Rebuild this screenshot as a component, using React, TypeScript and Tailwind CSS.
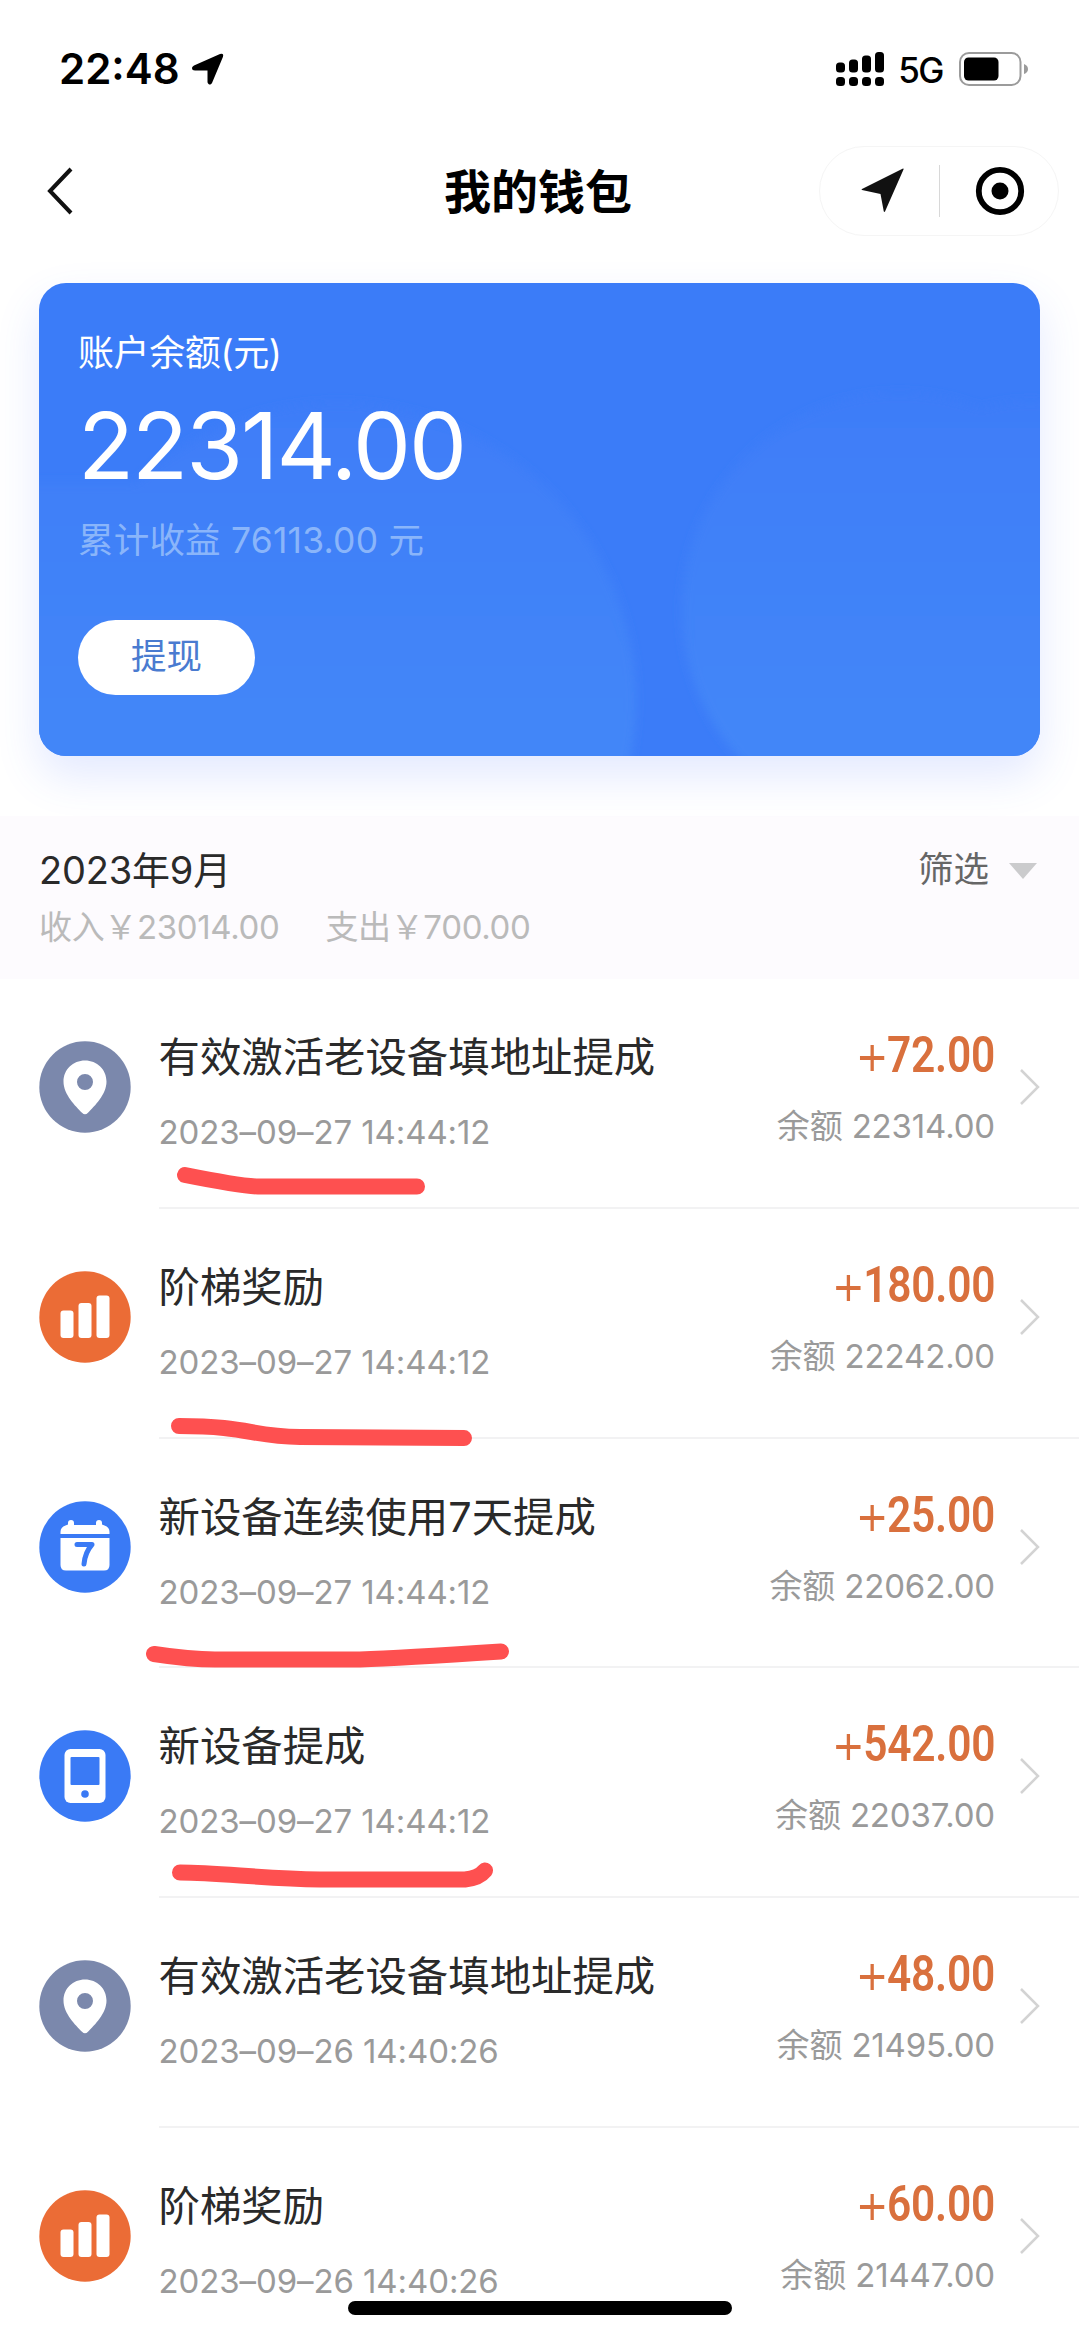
import type { ReactNode } from "react";

type Kind = "pin" | "bars" | "calendar" | "phone";

interface Entry {
  kind: Kind;
  title: string;
  time: string;
  amount: string;
  balance: string;
  mark?: string;
}

/* `mark` is the red pen stroke under an entry, in row coordinates */
const entries: Entry[] = [
  { kind: "pin", title: "有效激活老设备填地址提成", time: "2023–09–27 14:44:12", amount: "72.00", balance: "22314.00", mark: "M185 196 Q240 207 258 207.500 L417 207.500" },
  { kind: "bars", title: "阶梯奖励", time: "2023–09–27 14:44:12", amount: "180.00", balance: "22242.00", mark: "M179 217 C250 217 250 227.500 300 228 L464 229" },
  { kind: "calendar", title: "新设备连续使用7天提成", time: "2023–09–27 14:44:12", amount: "25.00", balance: "22062.00", mark: "M154 215 Q190 220.500 215 220.500 L360 220.500 Q400 219 501 212.500" },
  { kind: "phone", title: "新设备提成", time: "2023–09–27 14:44:12", amount: "542.00", balance: "22037.00", mark: "M180 204.500 C220 204.500 260 210.500 320 211.500 L465 211.500 Q479 210 485 202.500" },
  { kind: "pin", title: "有效激活老设备填地址提成", time: "2023–09–26 14:40:26", amount: "48.00", balance: "21495.00" },
  { kind: "bars", title: "阶梯奖励", time: "2023–09–26 14:40:26", amount: "60.00", balance: "21447.00" },
];

const glyphs: Record<Kind, { fill: string; art: ReactNode }> = {
  pin: {
    fill: "#7b88ac",
    art: (
      <path
        fillRule="evenodd"
        fill="#fff"
        d="M46 19.500c-12 0-21.500 9-21.500 21 0 13 12 24.500 18.500 31.300q3 3 6 0C55.500 65 67.500 53.500 67.500 40.500c0-12-9.500-21-21.500-21zm0 13.500a8 8 0 1 1 0 16 8 8 0 0 1 0-16z"
      />
    ),
  },
  bars: {
    fill: "#eb6c36",
    art: (
      <g fill="#fff">
        <rect x="21.500" y="39.500" width="13" height="27.500" rx="3" />
        <rect x="39.500" y="32" width="13" height="35" rx="3" />
        <rect x="57.500" y="24.500" width="13" height="42.500" rx="3" />
      </g>
    ),
  },
  calendar: {
    fill: "#3a7af5",
    art: (
      <g>
        <path
          fill="#fff"
          d="M21.500 33v-2q0-5 5-6.500l2.500-1v-1.500a3 3 0 0 1 6 0v2h22v-2a3 3 0 0 1 6 0v1.500l2.500 1q5 1.500 5 6.500v2zM21.500 37h49v27q0 5.500-5.500 5.500H27q-5.500 0-5.500-5.500z"
        />
        <path d="M38 43.500h15q-7 8-8 19.500" fill="none" stroke="#3a7af5" strokeWidth="5" strokeLinecap="round" strokeLinejoin="round" />
      </g>
    ),
  },
  phone: {
    fill: "#3a7af5",
    art: (
      <g>
        <rect x="25.500" y="19" width="41" height="54" rx="6" fill="#fff" />
        <rect x="31.500" y="27" width="29" height="28" rx="1" fill="#3a7af5" />
        <circle cx="46" cy="64" r="3.800" fill="#3a7af5" />
      </g>
    ),
  },
};

function EntryIcon({ kind }: { kind: Kind }) {
  const { fill, art } = glyphs[kind];
  return (
    <svg viewBox="0 0 92 92" className="mt-[62px] size-[92px] shrink-0">
      <circle cx="46" cy="46" r="45.700" fill={fill} />
      {art}
    </svg>
  );
}

function EntryRow({ entry }: { entry: Entry }) {
  return (
    <li className="relative flex h-[229.8px] shrink-0 pl-[38.5px]">
      <EntryIcon kind={entry.kind} />
      <div className="ml-[28px] flex grow border-b-2 border-[#f2f2f3]">
        <div className="flex grow flex-col pt-[53px]">
          <span className="text-[41.4px] leading-[50px] text-[#2a2a2a]">{entry.title}</span>
          <span className="mt-[25px] text-[33px] leading-[50px] tracking-[-0.1px] text-[#9a9a9a]">{entry.time}</span>
        </div>
        <div className="flex flex-col items-end pt-[46px]">
          <span className="flex origin-right scale-x-[0.85] items-center font-['Roboto'] leading-[60px] text-[#d9703d]">
            <svg viewBox="0 0 30 26" preserveAspectRatio="none" className="mt-[6px] mr-[3px] h-[26px] w-[29px]">
              <path d="M0 13h30M15 0v26" stroke="currentColor" strokeWidth="4" fill="none" />
            </svg>
            <span className="text-[50px] font-semibold tracking-[-0.3px]">{entry.amount}</span>
          </span>
          <span className="mt-[16px] text-[33px] leading-[50px] tracking-[-0.15px] text-[#9a9a9a]">余额 {entry.balance}</span>
        </div>
        <svg viewBox="0 0 22 38" className="mt-[89px] mr-[38px] ml-[24px] h-[38px] w-[22px]">
          <path d="M2 2l17 17L2 36" fill="none" stroke="#d3d3d3" strokeWidth="2.500" />
        </svg>
      </div>
      {entry.mark && (
        <svg viewBox="0 0 560 250" className="absolute top-0 left-0 z-10 h-[250px] w-[560px]">
          <path d={entry.mark} fill="none" stroke="#fe5050" strokeWidth="16" strokeLinecap="round" />
        </svg>
      )}
    </li>
  );
}

function StatusBar() {
  return (
    <div className="flex h-[138px] shrink-0 items-center pl-[59px] pr-[50px]">
      <span className="text-[42px] font-semibold leading-none">22:48</span>
      <svg viewBox="0 0 34 34" className="ml-[11px] size-[34px]">
        <path
          d="M3 13.500 29 2q4-1.300 3 2.700L21 31q-1.500 2.500-3.500 1-1-.8-1-2V18.500H4q-3 0-3-2.500 0-1.500 2-2.500z"
          fill="#000"
        />
      </svg>
      <svg viewBox="0 0 49 36" className="ml-auto h-[36px] w-[49px]">
        <rect x="0" y="11.500" width="9" height="10" rx="3.500" />
        <rect x="13" y="8.500" width="9" height="13" rx="3.500" />
        <rect x="26" y="4.500" width="9" height="17" rx="3.500" />
        <rect x="39" y="1" width="9" height="20.500" rx="3.500" />
        <rect x="0" y="26" width="9" height="9" rx="3.500" />
        <rect x="13" y="26" width="9" height="9" rx="3.500" />
        <rect x="26" y="26" width="9" height="9" rx="3.500" />
        <rect x="39" y="26" width="9" height="9" rx="3.500" />
      </svg>
      <span className="mt-[3px] ml-[13px] text-[35px] font-medium leading-none tracking-[-1.500px]">5G</span>
      <svg viewBox="0 0 70 34" className="ml-[16px] h-[34px] w-[70px]">
        <rect x="1" y="1" width="60.500" height="32" rx="9" fill="none" stroke="#9b9b9b" strokeWidth="2" />
        <rect x="5" y="5.500" width="34.500" height="23" rx="4.500" />
        <path d="M65 12q4 1.500 4 5t-4 5z" fill="#9b9b9b" />
      </svg>
    </div>
  );
}

function NavBar() {
  return (
    <div className="grid h-[106px] shrink-0 grid-cols-3 items-center">
      <svg viewBox="0 0 26 48" className="ml-[47px] h-[48px] w-[26px]">
        <path d="M24 2 3 24l21 22" fill="none" stroke="#111" strokeWidth="4" />
      </svg>
      <h1 className="-ml-[3px] pt-px text-center text-[47px] font-bold leading-none">我的钱包</h1>
      <div className="mr-[20px] ml-auto flex h-[90px] w-[240px] items-center rounded-full border border-[#f5f5f5]">
        <svg viewBox="0 0 44 46" className="ml-[41px] h-[46px] w-[44px]">
          <path d="M42.500 1.500 24 43.500q-1 1-1.300-.5L19.500 26 1 22q-1-.5 0-1L41.500.7q1.500-.4 1 .8z" fill="#111" />
        </svg>
        <div className="ml-[34px] h-[52px] w-px bg-[#d8d8d8]" />
        <svg viewBox="0 0 50 50" className="ml-[35px] size-[50px]">
          <circle cx="25" cy="25" r="21.200" fill="none" stroke="#000" strokeWidth="5.800" />
          <circle cx="25" cy="25" r="8.500" />
        </svg>
      </div>
    </div>
  );
}

function BalanceCard() {
  return (
    <section className="relative mx-[39px] mt-[38.5px] h-[473.5px] shrink-0 overflow-hidden rounded-[27px] bg-[#3b7cf8] text-white shadow-[0_20px_44px_rgba(70,110,255,0.15)]">
      <svg viewBox="0 0 1001 474" className="absolute inset-0 size-full">
        <defs>
          <linearGradient id="glow" gradientUnits="userSpaceOnUse" x1="0" y1="60" x2="0" y2="440">
            <stop offset="0" stopColor="#3d7bf8" />
            <stop offset="1" stopColor="#4386f8" />
          </linearGradient>
          <filter id="soft">
            <feGaussianBlur stdDeviation="5" />
          </filter>
        </defs>
        <g fill="url(#glow)" filter="url(#soft)">
          <circle cx="299" cy="418" r="298" />
          <circle cx="861" cy="328" r="218" />
          <circle cx="991" cy="278" r="160" />
          <rect x="-20" y="200" width="140" height="294" />
        </g>
      </svg>
      <div className="relative flex flex-col items-start pl-[39px] pt-[45px]">
        <span className="text-[36px] leading-[50px] tracking-[-0.4px]">账户余额(元)</span>
        <span className="mt-[22px] text-[92px] font-normal leading-[92px] tracking-[-2px]">22314.00</span>
        <span className="mt-[24px] text-[35.5px] leading-[50px] tracking-[0.2px] text-[#8ab5fa]">累计收益 76113.00 元</span>
        <button className="mt-[54px] h-[75px] w-[177px] rounded-full bg-white text-[35.5px] leading-[72px] text-[#4a7bd0]">提现</button>
      </div>
    </section>
  );
}

function MonthSummary() {
  return (
    <section className="mt-[60px] flex h-[163px] shrink-0 items-start justify-between bg-[#fdfbfe] pl-[39px]">
      <div className="flex flex-col pt-[29px]">
        <span className="text-[38px] leading-[50px] tracking-[-0.2px] text-[#2a2a2a]">2023年9月</span>
        <div className="mt-[7px] flex gap-[46px] text-[33px] leading-[50px] tracking-[-0.35px] text-[#bababa]">
          <span>收入￥23014.00</span>
          <span>支出￥700.00</span>
        </div>
      </div>
      <div className="flex items-center pt-[29px] pr-[42px] text-[35.5px] leading-[50px] text-[#666]">
        <span>筛选</span>
        <svg viewBox="0 0 28 17" className="ml-[20px] h-[17px] w-[28px]">
          <path d="M0 1h28L14 17z" fill="#cbcbcd" />
        </svg>
      </div>
    </section>
  );
}

export default function App() {
  return (
    <main className="relative flex h-[2337px] w-[1079px] flex-col overflow-hidden bg-white font-['Inter','Noto_Sans_CJK_SC',sans-serif] text-black">
      <StatusBar />
      <NavBar />
      <BalanceCard />
      <MonthSummary />
      <ul className="flex shrink-0 flex-col">
        {entries.map((entry) => (
          <EntryRow key={entry.balance} entry={entry} />
        ))}
      </ul>
      <div className="absolute bottom-[22px] left-[348px] h-[14px] w-[384px] rounded-full bg-black" />
    </main>
  );
}
